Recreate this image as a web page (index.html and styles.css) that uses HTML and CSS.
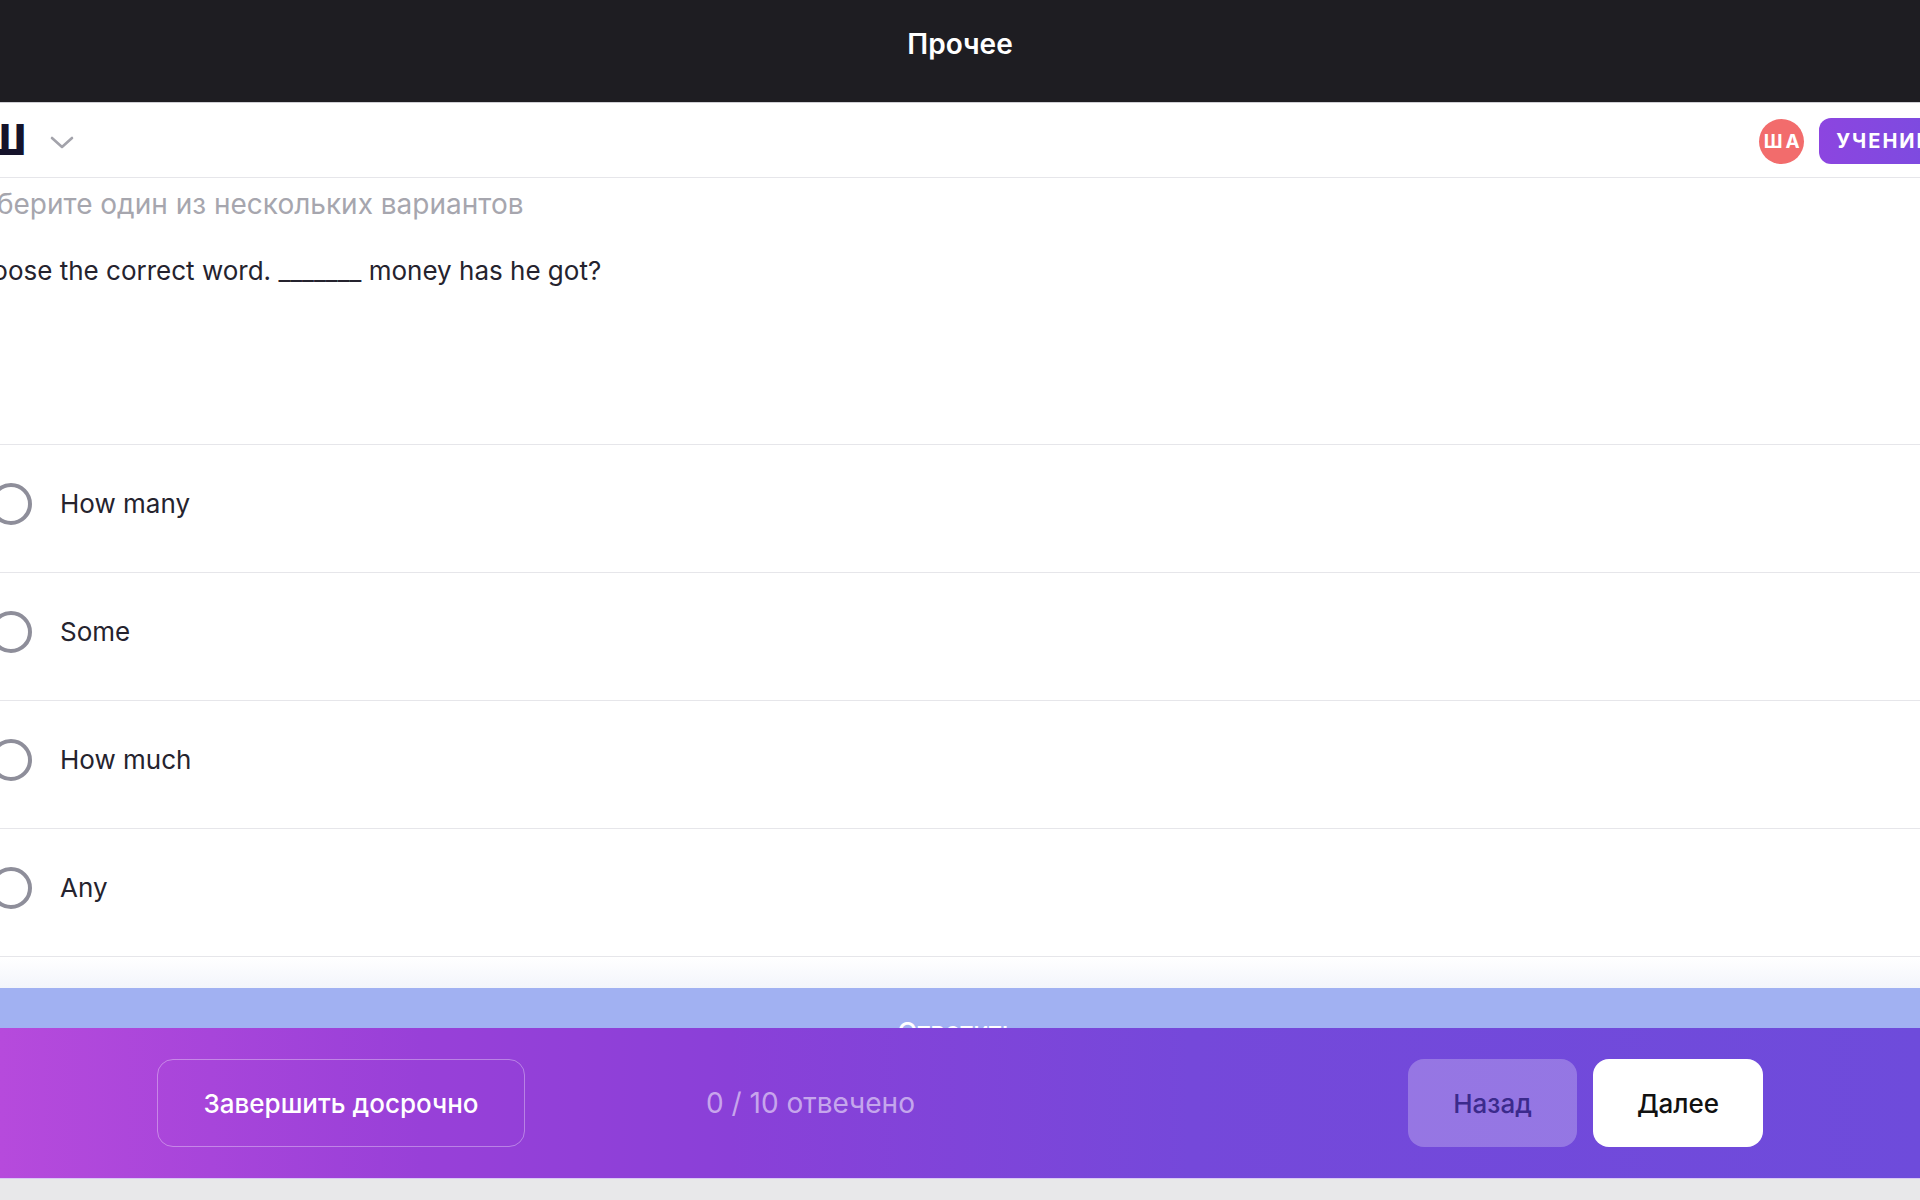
FILE: index.html
```html
<!DOCTYPE html>
<html lang="ru">
<head>
    <meta charset="UTF-8">
    <meta name="viewport" content="width=device-width, initial-scale=1.0">
    <title>Прочее</title>
    <link rel="stylesheet" href="styles.css">
</head>
<body>
    <div id="topbar">
        <h1>Прочее</h1>
    </div>

    <div id="subbar">
        <div class="brand">
            <span class="brand-mark">Ш</span>
            <svg class="chevron" width="24" height="14" viewBox="0 0 24 14">
                <path d="M2 2 L12 11 L22 2" fill="none" stroke="#a3a3ab" stroke-width="2.6" stroke-linecap="round" stroke-linejoin="round"/>
            </svg>
        </div>
        <div class="user">
            <span class="avatar">ША</span>
            <span class="role">УЧЕНИК</span>
        </div>
    </div>

    <div id="test">
        <div class="question">
            <p class="hint">Выберите один из нескольких вариантов</p>
            <p class="q-text">Choose the correct word. _______ money has he got?</p>
        </div>

        <ul class="options">
            <li><span class="radio"></span>How many</li>
            <li><span class="radio"></span>Some</li>
            <li><span class="radio"></span>How much</li>
            <li><span class="radio"></span>Any</li>
        </ul>

        <div class="fade"></div>
        <div class="answer-wrap">
            <button class="answer">Ответить</button>
        </div>
    </div>

    <div id="bottombar">
        <button class="finish">Завершить досрочно</button>
        <span class="counter">0 / 10 отвечено</span>
        <div class="nav">
            <button class="back">Назад</button>
            <button class="next">Далее</button>
        </div>
    </div>
    <div id="under"></div>
</body>
</html>
```

FILE: styles.css
```css
body {
    margin: 0;
    padding: 0;
    font-family: "Inter", "Noto Sans", sans-serif;
    background: #ffffff;
    color: #25232e;
    overflow: hidden;
    height: 1200px;
}

#topbar {
    height: 102px;
    background-color: #1e1d22;
    color: #ffffff;
    display: flex;
    justify-content: center;
    align-items: center;
}

#topbar h1 {
    margin: 0;
    font-size: 28px;
    font-weight: 600;
    padding-bottom: 14px;
}

#subbar {
    height: 74px;
    border-top: 1px solid #cfcfd4;
    border-bottom: 1px solid #e6e6ea;
    display: flex;
    justify-content: space-between;
    align-items: center;
}

.brand {
    display: flex;
    align-items: center;
    gap: 24px;
}

.brand-mark {
    font-size: 42px;
    font-weight: 800;
    color: #15132b;
    margin-left: -16px;
    line-height: 1;
}

.chevron {
    margin-top: 6px;
}

.user {
    display: flex;
    align-items: center;
    gap: 15px;
    margin-right: -30px;
    margin-top: 2px;
}

.avatar {
    width: 45px;
    height: 45px;
    border-radius: 50%;
    background-color: #f26c6c;
    color: #ffffff;
    font-size: 19px;
    font-weight: 700;
    letter-spacing: 3px;
    text-indent: 3px;
    display: flex;
    justify-content: center;
    align-items: center;
}

.role {
    height: 46px;
    padding: 0 17px;
    border-radius: 12px;
    background: linear-gradient(90deg, #8c45e0, #7a4ce0);
    color: #ffffff;
    font-size: 20px;
    font-weight: 700;
    letter-spacing: 2px;
    display: flex;
    align-items: center;
}

/* блок вопроса */
#test {
    margin-left: -69px;
}

.question {
    height: 266px;
    box-sizing: border-box;
    padding: 8px 27px 0;
}

.hint {
    margin: 0;
    font-size: 28px;
    line-height: 36px;
    color: #a6a6ae;
}

.q-text {
    margin: 31px 0 0;
    font-size: 26px;
    line-height: 36px;
    color: #25232e;
}

.options {
    list-style: none;
    margin: 0;
    padding: 0;
    border-bottom: 1px solid #e6e6ea;
}

.options li {
    height: 128px;
    box-sizing: border-box;
    border-top: 1px solid #e6e6ea;
    padding: 38px 0 0 59px;
    display: flex;
    align-items: flex-start;
    gap: 28px;
    font-size: 26px;
    line-height: 42px;
    color: #25232e;
}

.radio {
    width: 42px;
    height: 42px;
    box-sizing: border-box;
    border: 4px solid #8e8e9a;
    border-radius: 50%;
    flex-shrink: 0;
}

.fade {
    height: 31px;
    background: linear-gradient(#ffffff, #f3f5fb);
}

.answer-wrap {
    height: 40px;
    overflow: hidden;
    margin-left: 69px;
}

.answer {
    width: 100%;
    height: 88px;
    border: none;
    background-color: #a1b1f2;
    color: #ffffff;
    font-family: inherit;
    font-size: 26px;
    font-weight: 500;
    padding-top: 0;
    padding-left: 0;
}

/* нижняя панель */
#bottombar {
    height: 150px;
    box-sizing: border-box;
    padding: 0 157px;
    background: linear-gradient(90deg, #b64adc 0%, #9840d8 22%, #8a40d8 38%, #7548da 62%, #6e4bdb 100%);
    display: flex;
    align-items: center;
}

#bottombar button {
    height: 88px;
    border-radius: 16px;
    font-family: inherit;
    font-size: 26px;
    font-weight: 500;
    cursor: pointer;
}

.finish {
    width: 368px;
    background: transparent;
    border: 1.5px solid rgba(255, 255, 255, 0.35);
    color: #ffffff;
}

.counter {
    margin-left: 181px;
    font-size: 28px;
    color: rgba(255, 255, 255, 0.55);
}

.nav {
    margin-left: auto;
    display: flex;
    gap: 16px;
}

.back {
    width: 169px;
    border: none;
    background-color: rgba(255, 255, 255, 0.25);
    color: #3b2a8c;
}

.next {
    width: 170px;
    border: none;
    background-color: #ffffff;
    color: #111111;
}

#under {
    height: 22px;
    background-color: #e8e8ea;
    border-top: 1px solid #d9c8f4;
}
```
